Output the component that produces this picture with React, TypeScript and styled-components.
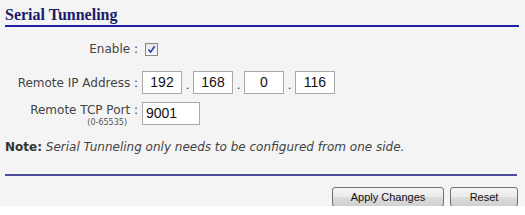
import React from "react";
import styled, { createGlobalStyle } from "styled-components";

const GlobalStyle = createGlobalStyle`
	html, body {
		margin: 0;
		padding: 0;
		background: #ffffff;
	}
`;

const Panel = styled.div`
	box-sizing: border-box;
	width: 525px;
	height: 206px;
	padding: 0 6px 0 5px;
	background: #f4f4f4;
	font-family: "DejaVu Sans", Verdana, sans-serif;
	font-size: 12px;
	color: #444444;
`;

const Title = styled.h2`
	margin: 0;
	padding-top: 5px;
	line-height: 20px;
	font-family: "Liberation Serif", "Times New Roman", serif;
	font-size: 16px;
	font-weight: bold;
	color: #1b1b6a;
	border-bottom: 2px solid #2121a6;
`;

const Row = styled.div<{ $top: number; $align?: string }>`
	display: flex;
	align-items: ${(p) => p.$align || "center"};
	margin-top: ${(p) => p.$top}px;
`;

const Label = styled.div`
	width: 133px;
	text-align: right;
	line-height: 14px;
	white-space: nowrap;
	color: #444444;
`;

const Hint = styled.div`
	font-size: 8px;
	line-height: 10px;
	margin-top: 1px;
	padding-right: 11px;
	color: #555555;
`;

const Controls = styled.div<{ $gap: number }>`
	display: flex;
	align-items: center;
	margin-left: ${(p) => p.$gap}px;
`;

const CheckBox = styled.span`
	box-sizing: border-box;
	display: inline-flex;
	align-items: center;
	justify-content: center;
	width: 13px;
	height: 13px;
	border: 1px solid #8a8a8a;
	background: linear-gradient(#e6e6e6, #fbfbfb);
`;

const Field = styled.div<{ $w: number; $center?: boolean }>`
	box-sizing: border-box;
	width: ${(p) => p.$w}px;
	height: 23px;
	padding: 0 3px;
	border: 1px solid #a9a9a9;
	background: #ffffff;
	font-family: "Liberation Sans", Arial, sans-serif;
	font-size: 14px;
	line-height: 21px;
	color: #111111;
	text-align: ${(p) => (p.$center ? "center" : "left")};
`;

const Dot = styled.span`
	width: 11px;
	text-align: center;
	font-family: "Liberation Sans", Arial, sans-serif;
	font-size: 13px;
	color: #333333;
	padding-top: 4px;
`;

const Note = styled.p`
	margin: 12px 0 0;
	line-height: 15px;
	color: #333333;
	b {
		color: #333333;
	}
	i {
		color: #444444;
	}
`;

const Divider = styled.div`
	margin-top: 19px;
	margin-right: 2px;
	height: 2px;
	background: #4c4c9c;
`;

const ButtonBar = styled.div`
	display: flex;
	justify-content: flex-end;
	gap: 6px;
	margin-top: 11px;
	padding-right: 1px;
`;

const Button = styled.button<{ $w: number }>`
	box-sizing: border-box;
	width: ${(p) => p.$w}px;
	height: 20px;
	padding: 0;
	border: 1px solid #707070;
	border-radius: 3px;
	background: linear-gradient(#f6f6f6 0%, #eaeaea 48%, #dcdcdc 52%, #d0d0d0 100%);
	font-family: "Liberation Sans", Arial, sans-serif;
	font-size: 11px;
	color: #111111;
`;

const ip = ["192", "168", "0", "116"];

export default function App() {
	return (
		<>
			<GlobalStyle />
			<Panel>
				<Title>Serial Tunneling</Title>
				<Row $top={15}>
					<Label>Enable :</Label>
					<Controls $gap={7}>
						<CheckBox>
							<svg width="9" height="9" viewBox="0 0 9 9">
								<path d="M1.5 4.5 L3.6 7.2 L7.6 1.2" fill="none" stroke="#2a3fbf" strokeWidth="1.6" />
							</svg>
						</CheckBox>
					</Controls>
				</Row>
				<Row $top={15}>
					<Label>Remote IP Address :</Label>
					<Controls $gap={4}>
						{ip.map((v, i) => (
							<React.Fragment key={i}>
								{i > 0 && <Dot>.</Dot>}
								<Field $w={40} $center>
									{v}
								</Field>
							</React.Fragment>
						))}
					</Controls>
				</Row>
				<Row $top={8} $align="flex-start">
					<Label>
						<div style={{ marginTop: 1 }}>Remote TCP Port :</div>
						<Hint>(0-65535)</Hint>
					</Label>
					<Controls $gap={4}>
						<Field $w={58}>9001</Field>
					</Controls>
				</Row>
				<Note>
					<b>Note:</b> <i>Serial Tunneling only needs to be configured from one side.</i>
				</Note>
				<Divider />
				<ButtonBar>
					<Button $w={112}>Apply Changes</Button>
					<Button $w={68}>Reset</Button>
				</ButtonBar>
			</Panel>
		</>
	);
}
